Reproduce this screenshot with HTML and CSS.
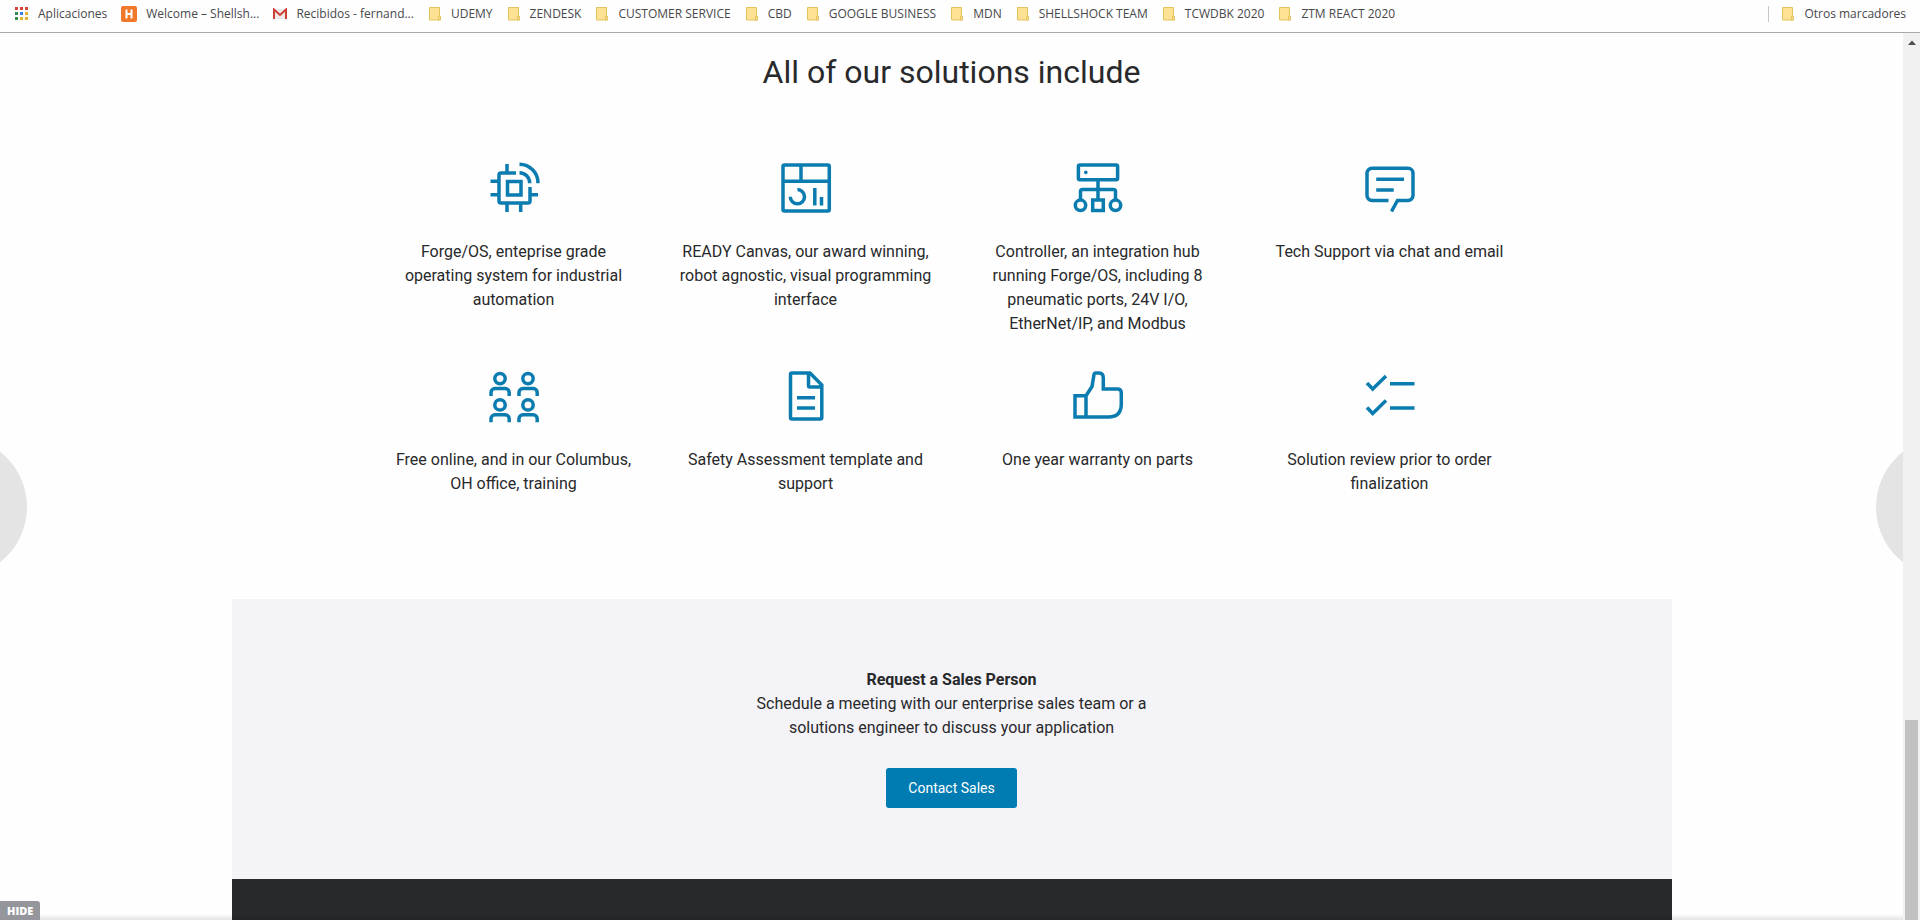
FILE: index.html
```html
<!DOCTYPE html>
<html lang="en">
<head>
<meta charset="utf-8">
<title>Solutions</title>
<link rel="stylesheet" href="styles.css">
</head>
<body>
<svg class="defs" aria-hidden="true">
  <symbol id="folder" viewBox="0 0 14 16">
    <path d="M1.5 1.5h10v9.500h1v3h-11z" fill="#fde293" stroke="#e3c35c"/>
    <path d="M10.500 14v-3.500h2v3.500z" fill="#fde293" stroke="#e3c35c"/>
  </symbol>
</svg>

<nav class="bookmarks" aria-label="Bookmarks">
  <a class="bookmark apps" href="#">
    <svg width="14" height="14" viewBox="0 0 14 14"><path d="M0 0h3v3H0zM5 0h3v3H5zM10 0h3v3h-3z" fill="#d9453d"/><path d="M0 5h3v3H0zM0 10h3v3H0z" fill="#3a8a55"/><path d="M5 5h3v3H5z" fill="#3b7ded"/><path d="M10 5h3v3h-3zM5 10h3v3H5zM10 10h3v3h-3z" fill="#e8b12c"/></svg>
    Aplicaciones</a>
  <a class="bookmark welcome" href="#">
    <svg width="16" height="16" viewBox="0 0 16 16"><rect width="16" height="16" rx="2" fill="#f0782a"/><path d="M5.500 3.500v9M10.500 3.500v9M5 8h6" stroke="#fff" stroke-width="2"/></svg>
    Welcome – Shellsh...</a>
  <a class="bookmark inbox" href="#">
    <svg width="14" height="12" viewBox="0 0 14 12"><path d="M0 1h14v10H0z" fill="#eceaea"/><path d="M1 11V1.500l6 5.500 6-5.500V11" fill="none" stroke="#cf3f36" stroke-width="2"/></svg>
    Recibidos - fernand...</a>
  <a class="bookmark" href="#"><svg width="14" height="16"><use href="#folder"/></svg>UDEMY</a>
  <a class="bookmark" href="#"><svg width="14" height="16"><use href="#folder"/></svg>ZENDESK</a>
  <a class="bookmark" href="#"><svg width="14" height="16"><use href="#folder"/></svg>CUSTOMER SERVICE</a>
  <a class="bookmark" href="#"><svg width="14" height="16"><use href="#folder"/></svg>CBD</a>
  <a class="bookmark" href="#"><svg width="14" height="16"><use href="#folder"/></svg>GOOGLE BUSINESS</a>
  <a class="bookmark" href="#"><svg width="14" height="16"><use href="#folder"/></svg>MDN</a>
  <a class="bookmark" href="#"><svg width="14" height="16"><use href="#folder"/></svg>SHELLSHOCK TEAM</a>
  <a class="bookmark" href="#"><svg width="14" height="16"><use href="#folder"/></svg>TCWDBK 2020</a>
  <a class="bookmark" href="#"><svg width="14" height="16"><use href="#folder"/></svg>ZTM REACT 2020</a>
  <a class="bookmark others" href="#"><svg width="14" height="16"><use href="#folder"/></svg>Otros marcadores</a>
</nav>

<div class="viewport">
  <div class="page">
    <main class="content">
      <section class="solutions">
        <h1 class="heading">All of our solutions include</h1>
        <ul class="features">
          <li class="feature">
            <svg class="icon" viewBox="0 0 64 64"><path d="M34 17H19a2 2 0 0 0-2 2v26a2 2 0 0 0 2 2h27a2 2 0 0 0 2-2V31M25.500 25.500h13.500v13.500H25.500zM25 8v9M8.500 25.300H17M8.500 38.700H17M48 38.700h8M25 47v9M38.700 47v9M37.500 16.700a10.200 10.500 0 0 1 10.200 10.600M37.500 8.200A18.600 19 0 0 1 56 27.300"/></svg>
            <p>Forge/OS, enteprise grade operating system for industrial automation</p>
          </li>
          <li class="feature">
            <svg class="icon" viewBox="0 0 64 64"><rect x="9" y="9" width="46.300" height="46" rx="1.500"/><path d="M9 25.300h46M27 9v16M23.400 33.600a7.100 7.100 0 1 1-7.100 7.100M40.800 32v17.500M47.500 41v8.500"/></svg>
            <p>READY Canvas, our award winning, robot agnostic, visual programming interface</p>
          </li>
          <li class="feature">
            <svg class="icon" viewBox="0 0 64 64"><rect x="12.400" y="9" width="39.200" height="14.700" rx="1.500"/><circle class="dot" cx="19.800" cy="16.400" r="1.800"/><path d="M32 24v20M14.500 44v-8.500a2 2 0 0 1 2-2h31a2 2 0 0 1 2 2V44M26.700 44h10.600v10.600H26.700z"/><circle cx="14.500" cy="49.300" r="5.200"/><circle cx="49.500" cy="49.300" r="5.200"/></svg>
            <p>Controller, an integration hub running Forge/OS, including 8 pneumatic ports, 24V I/O, EtherNet/IP, and Modbus</p>
          </li>
          <li class="feature">
            <svg class="icon" viewBox="0 0 64 64"><path d="M30.500 44.500H14a5 5 0 0 1-5-5V17.300a5 5 0 0 1 5-5h36a5 5 0 0 1 5 5v22.200a5 5 0 0 1-5 5H39.500L33.500 55.500M18.200 23.300H46M18.200 34h17.500"/></svg>
            <p>Tech Support via chat and email</p>
          </li>
          <li class="feature">
            <svg class="icon" viewBox="0 0 64 64"><g id="person"><circle cx="18" cy="14.600" r="5.200"/><path d="M9 32v-3.500a4 4 0 0 1 4-4h10.200a4 4 0 0 1 4 4V32"/></g><use href="#person" x="28"/><use href="#person" y="26.300"/><use href="#person" x="28" y="26.300"/></svg>
            <p>Free online, and in our Columbus, OH office, training</p>
          </li>
          <li class="feature">
            <svg class="icon" viewBox="0 0 64 64"><path d="M36 9H18a1.500 1.500 0 0 0-1.500 1.500v43A1.500 1.500 0 0 0 18 55h28.300a1.500 1.500 0 0 0 1.500-1.500V21zM34.500 9v12.500a1.500 1.500 0 0 0 1.500 1.500h12M23 33.700h18M23 44h18"/></svg>
            <p>Safety Assessment template and support</p>
          </li>
          <li class="feature">
            <svg class="icon" viewBox="0 0 64 64"><path d="M9 31.700h11V53H9zM20 31.700L26 22.500 28 10.500Q28.300 9 29.800 9H33Q37.300 9 37.300 14V25H51.500Q55.300 25 55.300 29V40Q55.300 53 42.500 53H20"/></svg>
            <p>One year warranty on parts</p>
          </li>
          <li class="feature">
            <svg class="icon" viewBox="0 0 64 64"><path d="M9 19l5.700 6L28 12M32 19.700h24.500M9 43.500l5.700 6L28 36.500M32 44h24.500"/></svg>
            <p>Solution review prior to order finalization</p>
          </li>
        </ul>
      </section>
      <section class="sales">
        <p class="pitch"><strong>Request a Sales Person</strong><br>Schedule a meeting with our enterprise sales team or a solutions engineer to discuss your application</p>
        <button class="contact" type="button">Contact Sales</button>
      </section>
      <footer class="footer"></footer>
    </main>
    <button class="arrow prev" type="button" aria-label="Previous"></button>
    <button class="arrow next" type="button" aria-label="Next"></button>
    <div class="shade"></div>
    <button class="hide" type="button">HIDE</button>
  </div>
  <div class="scrollbar">
    <svg class="up" width="8" height="5" viewBox="0 0 8 5"><path d="M0 5l4-4.500L8 5z" fill="#505050"/></svg>
    <div class="thumb"></div>
  </div>
</div>
</body>
</html>
```
FILE: styles.css
```css
* { box-sizing: border-box; }

body {
  margin: 0;
  height: 100vh;
  display: flex;
  flex-direction: column;
  overflow: hidden;
  background: #fefefe;
  color: #28292b;
  font-family: Roboto, "Liberation Sans", sans-serif;
  font-size: 16px;
  line-height: 24px;
}

button { font-family: inherit; border: 0; cursor: pointer; }

.defs { position: absolute; width: 0; height: 0; }

.bookmarks {
  display: flex;
  align-items: center;
  flex: none;
  height: 33px;
  padding: 0 14px 5px 15px;
  gap: 14px;
  border-bottom: 1px solid #a9a9a9;
  font-family: "Open Sans", "Noto Sans", sans-serif;
  font-size: 12px;
  line-height: 16px;
  white-space: nowrap;
}

.bookmark {
  display: flex;
  align-items: center;
  gap: 9px;
  color: #47484b;
  text-decoration: none;
}

.others {
  margin-left: auto;
  padding-left: 12px;
  border-left: 1px solid #c8c8c8;
}

.viewport { display: flex; flex: 1; min-height: 0; }

.page {
  position: relative;
  flex: 1;
  overflow: hidden;
}

.content {
  display: flex;
  flex-direction: column;
  height: 100%;
  max-width: 1440px;
  margin: 0 auto;
}

.solutions { padding: 19px 148px 103px; }

.heading {
  margin: 0 0 64px;
  font-size: 32px;
  font-weight: 400;
  line-height: 40px;
  text-align: center;
}

.features {
  display: grid;
  grid-template-columns: repeat(4, 1fr);
  gap: 28px 24px;
  margin: 0;
  padding: 0;
  list-style: none;
}

.feature {
  display: flex;
  flex-direction: column;
  align-items: center;
  gap: 20px;
  text-align: center;
}

.feature p { margin: 0; max-width: 254px; }

.icon {
  width: 64px;
  height: 64px;
  fill: none;
  stroke: #0a7cb0;
  stroke-width: 3.5;
}

.dot { fill: #0a7cb0; stroke: none; }

.sales {
  display: flex;
  flex-direction: column;
  align-items: center;
  gap: 28px;
  padding: 69px 24px 71px;
  background: #f4f3f8;
  text-align: center;
}

.pitch { margin: 0; max-width: 432px; }

.contact {
  height: 40px;
  padding: 0 22px;
  border-radius: 3px;
  background: #007cb2;
  color: #fff;
  font-size: 14px;
}

.footer { flex: 1; background: #28292b; }

.arrow {
  position: absolute;
  top: 404px;
  width: 140px;
  height: 140px;
  padding: 0;
  border-radius: 50%;
  background: #e4e4e4;
}

.prev { left: -113px; }
.next { right: -113px; }

.shade {
  position: absolute;
  inset: auto 0 0;
  height: 6px;
  background: linear-gradient(rgba(0, 0, 0, 0), rgba(0, 0, 0, 0.1));
}

.hide {
  position: absolute;
  left: 0;
  bottom: 0;
  height: 19px;
  padding: 0 7px;
  border-radius: 0 3px 0 0;
  background: #94969b;
  color: #fff;
  font-family: "Open Sans", sans-serif;
  font-size: 11px;
  font-weight: 800;
}

.scrollbar {
  display: flex;
  flex-direction: column;
  align-items: center;
  justify-content: space-between;
  width: 17px;
  padding-top: 7px;
  background: #f1f1f1;
}

.thumb {
  width: 13px;
  height: 200px;
  background: #c1c1c1;
}
```
